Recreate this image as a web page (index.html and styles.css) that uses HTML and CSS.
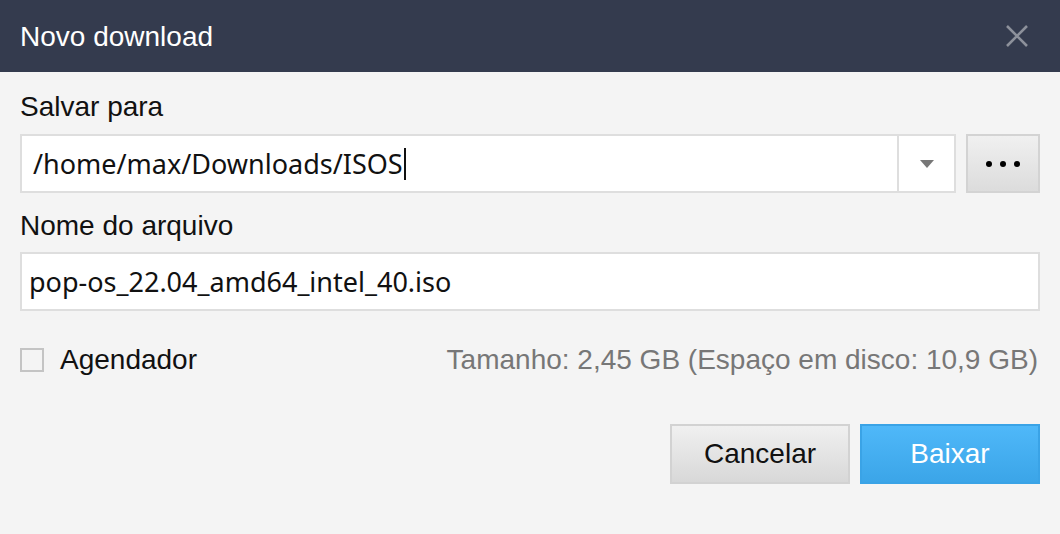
FILE: index.html
```html
<!DOCTYPE html>
<html lang="pt">
<head>
<meta charset="utf-8">
<link rel="stylesheet" href="styles.css">
</head>
<body>
<div class="dialog">
  <header class="titlebar">
    <span class="title">Novo download</span>
    <svg class="close" width="24" height="24" viewBox="0 0 24 24"><path d="M2 2 L22 22 M22 2 L2 22" stroke="#8d919b" stroke-width="2.6" fill="none"/></svg>
  </header>
  <main class="content">
    <div class="label">Salvar para</div>
    <div class="pathrow">
      <div class="combo">
        <div class="combo-text">/home/max/Downloads/ISOS<span class="caret"></span></div>
        <div class="combo-arrow"><svg width="14" height="8" viewBox="0 0 14 8"><path d="M0 0 H14 L7 8 Z" fill="#777"/></svg></div>
      </div>
      <div class="browse"><span class="dot"></span><span class="dot"></span><span class="dot"></span></div>
    </div>
    <div class="label label2">Nome do arquivo</div>
    <div class="field">pop-os_22.04_amd64_intel_40.iso</div>
    <div class="inforow">
      <label class="check"><span class="box"></span><span>Agendador</span></label>
      <span class="size">Tamanho: 2,45 GB (Espaço em disco: 10,9 GB)</span>
    </div>
    <div class="buttons">
      <div class="btn cancel">Cancelar</div>
      <div class="btn ok">Baixar</div>
    </div>
  </main>
</div>
</body>
</html>
```

FILE: styles.css
```css
html, body { margin: 0; padding: 0; }
body {
  width: 1060px;
  height: 534px;
  background: #f4f4f4;
  font-family: "Liberation Sans", Arial, sans-serif;
  color: #111;
  overflow: hidden;
}
.titlebar {
  height: 72px;
  background: #343b4e;
  display: flex;
  align-items: center;
  justify-content: space-between;
  padding: 0 31px 0 20px;
}
.title {
  color: #fff;
  font-size: 28px;
  padding-top: 1px;
}
.close { display: block; }
.content {
  padding: 20px 20px 0 20px;
  display: flex;
  flex-direction: column;
}
.label {
  font-size: 28px;
  line-height: 30px;
  height: 30px;
}
.pathrow {
  margin-top: 12px;
  display: flex;
  gap: 10px;
  height: 59px;
}
.combo {
  flex: 1;
  display: flex;
  background: #fff;
  border: 2px solid #dedede;
}
.combo-text, .field {
  font-family: "Noto Sans", "Open Sans", sans-serif;
  font-size: 27px;
  color: #111;
  display: flex;
  align-items: center;
}
.combo-text {
  flex: 1;
  padding-left: 11px;
}
.caret {
  display: inline-block;
  width: 2px;
  height: 32px;
  background: #111;
  margin-left: 1px;
}
.combo-arrow {
  width: 55px;
  border-left: 2px solid #dedede;
  display: flex;
  align-items: center;
  justify-content: center;
}
.browse {
  width: 70px;
  border: 2px solid #d3d3d3;
  background: linear-gradient(#f0f0f0, #dcdcdc);
  display: flex;
  align-items: center;
  justify-content: center;
  gap: 8px;
}
.dot {
  width: 6px;
  height: 6px;
  border-radius: 50%;
  background: #000;
}
.label2 { margin-top: 18px; }
.field {
  margin-top: 11px;
  height: 55px;
  background: #fff;
  border: 2px solid #dedede;
  padding-left: 7px;
}
.inforow {
  margin-top: 34px;
  height: 30px;
  display: flex;
  align-items: center;
  justify-content: space-between;
  font-size: 28px;
}
.check {
  display: flex;
  align-items: center;
  gap: 16px;
}
.box {
  width: 20px;
  height: 20px;
  border: 2px solid #c4c4c4;
  background: #f4f4f4;
}
.size {
  color: #777;
  padding-right: 2px;
}
.buttons {
  margin-top: 49px;
  display: flex;
  justify-content: flex-end;
  gap: 10px;
}
.btn {
  width: 176px;
  height: 56px;
  font-size: 28px;
  display: flex;
  align-items: center;
  justify-content: center;
}
.cancel {
  border: 2px solid #d2d2d2;
  background: linear-gradient(#f0f0f0, #d8d8d8);
  color: #111;
}
.ok {
  border: 2px solid #3aa3e6;
  background: linear-gradient(#4fb8f9, #3ba5e8);
  color: #fff;
}
```
